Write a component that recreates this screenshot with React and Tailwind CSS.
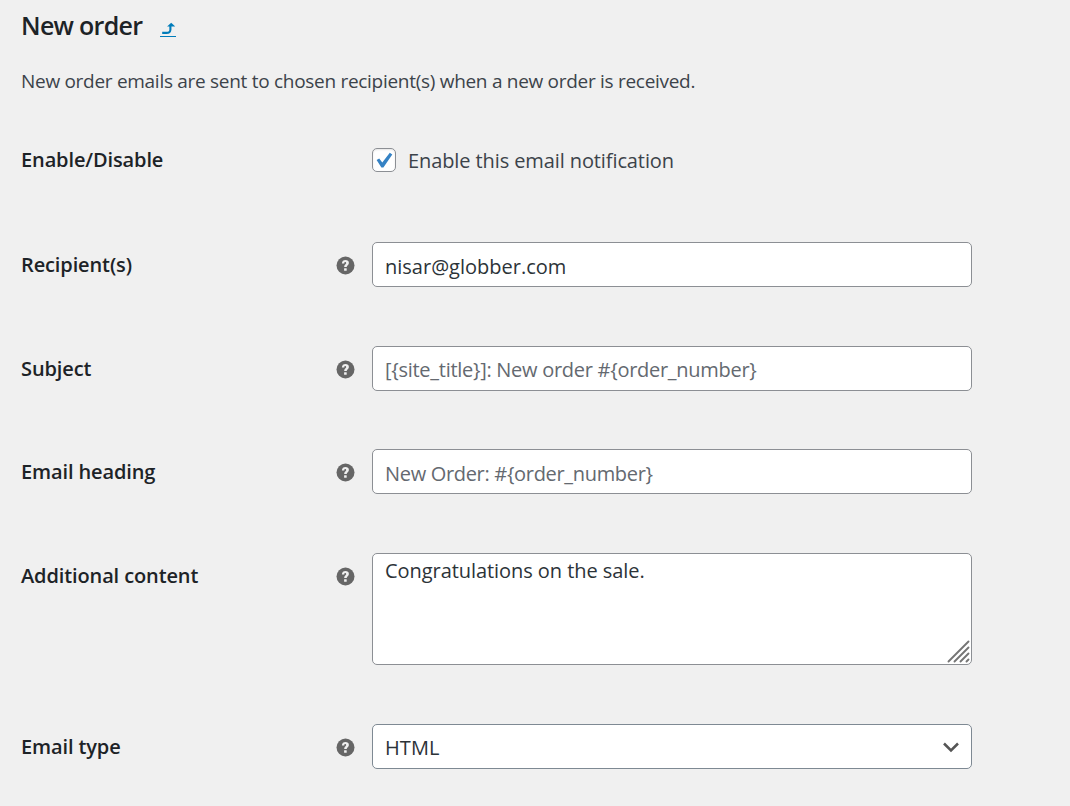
const fieldClass =
    'block w-[600px] rounded-[5px] border bg-white px-3 text-[20px] text-[#2c3338] outline-none placeholder:text-[#646970]'

function HelpTip() {
    return (
        <svg className="mt-px h-[19px] w-[19px] shrink-0" viewBox="-0.5 -0.5 19 19" aria-hidden="true">
            <circle cx="9" cy="9" r="9" fill="#666" />
            <path
                d="M5.4 6.9C5.5 4.8 6.9 3.6 9 3.6c2 0 3.4 1 3.4 2.8 0 2.2-2.2 2.3-2.2 4.2H7.7c0-2.7 2-2.8 2-4.1 0-.6-.3-.9-.9-.9-.7 0-1 .5-1 1.3Z"
                fill="#f0f0f0"
            />
            <rect x="7.6" y="11.7" width="2.6" height="2.5" rx=".3" fill="#f0f0f0" />
        </svg>
    )
}

function Row({ label, tip = true, className = '', children }) {
    return (
        <div className={`flex items-start ${className}`}>
            <div className="flex w-[351px] shrink-0 items-center justify-between pt-2 pr-[17px]">
                <span className="text-[20px] leading-[30px] font-semibold tracking-[-0.12px] whitespace-nowrap text-[#1d2327]">
                    {label}
                </span>
                {tip && <HelpTip />}
            </div>
            {children}
        </div>
    )
}

export default function App() {
    return (
        <div className="h-[806px] w-[1070px] overflow-hidden bg-[#f0f0f0] pl-[21px] font-['Open_Sans','Noto_Sans',sans-serif] text-[#3c434a]">
            <h2 className="flex h-[52px] items-center text-[25px] font-semibold tracking-[-0.7px] text-[#1d2327]">
                New order
                <a href="#" aria-label="Return to emails" className="mt-[8px] ml-[18px] block">
                    <svg className="h-[16px] w-[16px]" viewBox="0 0 16 16">
                        <path d="M2.2 10.9h4.2q3.8 0 4-3.2V3" fill="none" stroke="#007cba" strokeWidth="2.1" />
                        <path d="M7.1 4.6 11.2.7l4 3.9Z" fill="#007cba" />
                        <rect y="14" width="16" height="1" fill="#007cba" />
                    </svg>
                </a>
            </h2>
            <p className="mt-[14px] text-[19px] leading-[30px] tracking-[-0.29px]">
                New order emails are sent to chosen recipient(s) when a new order is received.
            </p>

            {/* Settings form */}
            <Row label="Enable/Disable" tip={false} className="mt-[41px] h-[105px]">
                <label className="flex items-center pt-[7px]">
                    <span className="flex h-6 w-6 items-center justify-center rounded-[5px] border border-[#8c8f94] bg-white shadow-[inset_0_1px_2px_rgba(0,0,0,0.1)]">
                        <svg className="h-[22px] w-[22px] shrink-0" viewBox="0 0 22 22">
                            <path d="m3.6 11 2.6-1.6 3.1 4 7.5-9.7 2.5 1.8-8.9 13.1H8.4Z" fill="#3582c4" />
                        </svg>
                    </span>
                    <span className="ml-3 pt-[2px] text-[20px] leading-[30px] tracking-[-0.1px]">Enable this email notification</span>
                </label>
            </Row>
            <Row label="Recipient(s)" className="h-[104px]">
                <input className={`${fieldClass} h-[45px] border-[#8c8f94] pt-1`} defaultValue="nisar@globber.com" />
            </Row>
            <Row label="Subject" className="h-[103px]">
                <input
                    className={`${fieldClass} h-[45px] border-[#8c8f94] pt-[2px] tracking-[-0.28px]`}
                    placeholder="[{site_title}]: New order #{order_number}"
                />
            </Row>
            <Row label="Email heading" className="h-[104px]">
                <input
                    className={`${fieldClass} h-[45px] border-[#8c8f94] pt-1 tracking-[-0.32px]`}
                    placeholder="New Order: #{order_number}"
                />
            </Row>
            <Row label="Additional content" className="h-[171px]">
                <div className="relative">
                    <textarea
                        className={`${fieldClass} h-[112px] resize-none border-[#8c8f94] pt-[3px] leading-[28px] tracking-[-0.06px]`}
                        defaultValue="Congratulations on the sale."
                    />
                    <svg className="absolute right-[1px] bottom-[1px] h-[24px] w-[24px]" viewBox="0 0 24 24">
                        <path
                            d="M1.5 21.5 21.5 1.5M7.5 21.5l14-14M13.5 21.5l8-8M19.5 21.5l2-2"
                            fill="none"
                            stroke="#757575"
                            strokeWidth="1.9"
                            strokeLinecap="round"
                        />
                    </svg>
                </div>
            </Row>
            <Row label="Email type">
                <button type="button" className={`${fieldClass} flex h-[45px] items-center justify-between border-[#7e8993]`}>
                    <span className="pt-[2px] tracking-[0.1px]">HTML</span>
                    <svg className="h-4 w-4" viewBox="0 0 16 16">
                        <path d="m1 4.5 7 7 7-7" fill="none" stroke="#555" strokeWidth="2.5" />
                    </svg>
                </button>
            </Row>
        </div>
    )
}
